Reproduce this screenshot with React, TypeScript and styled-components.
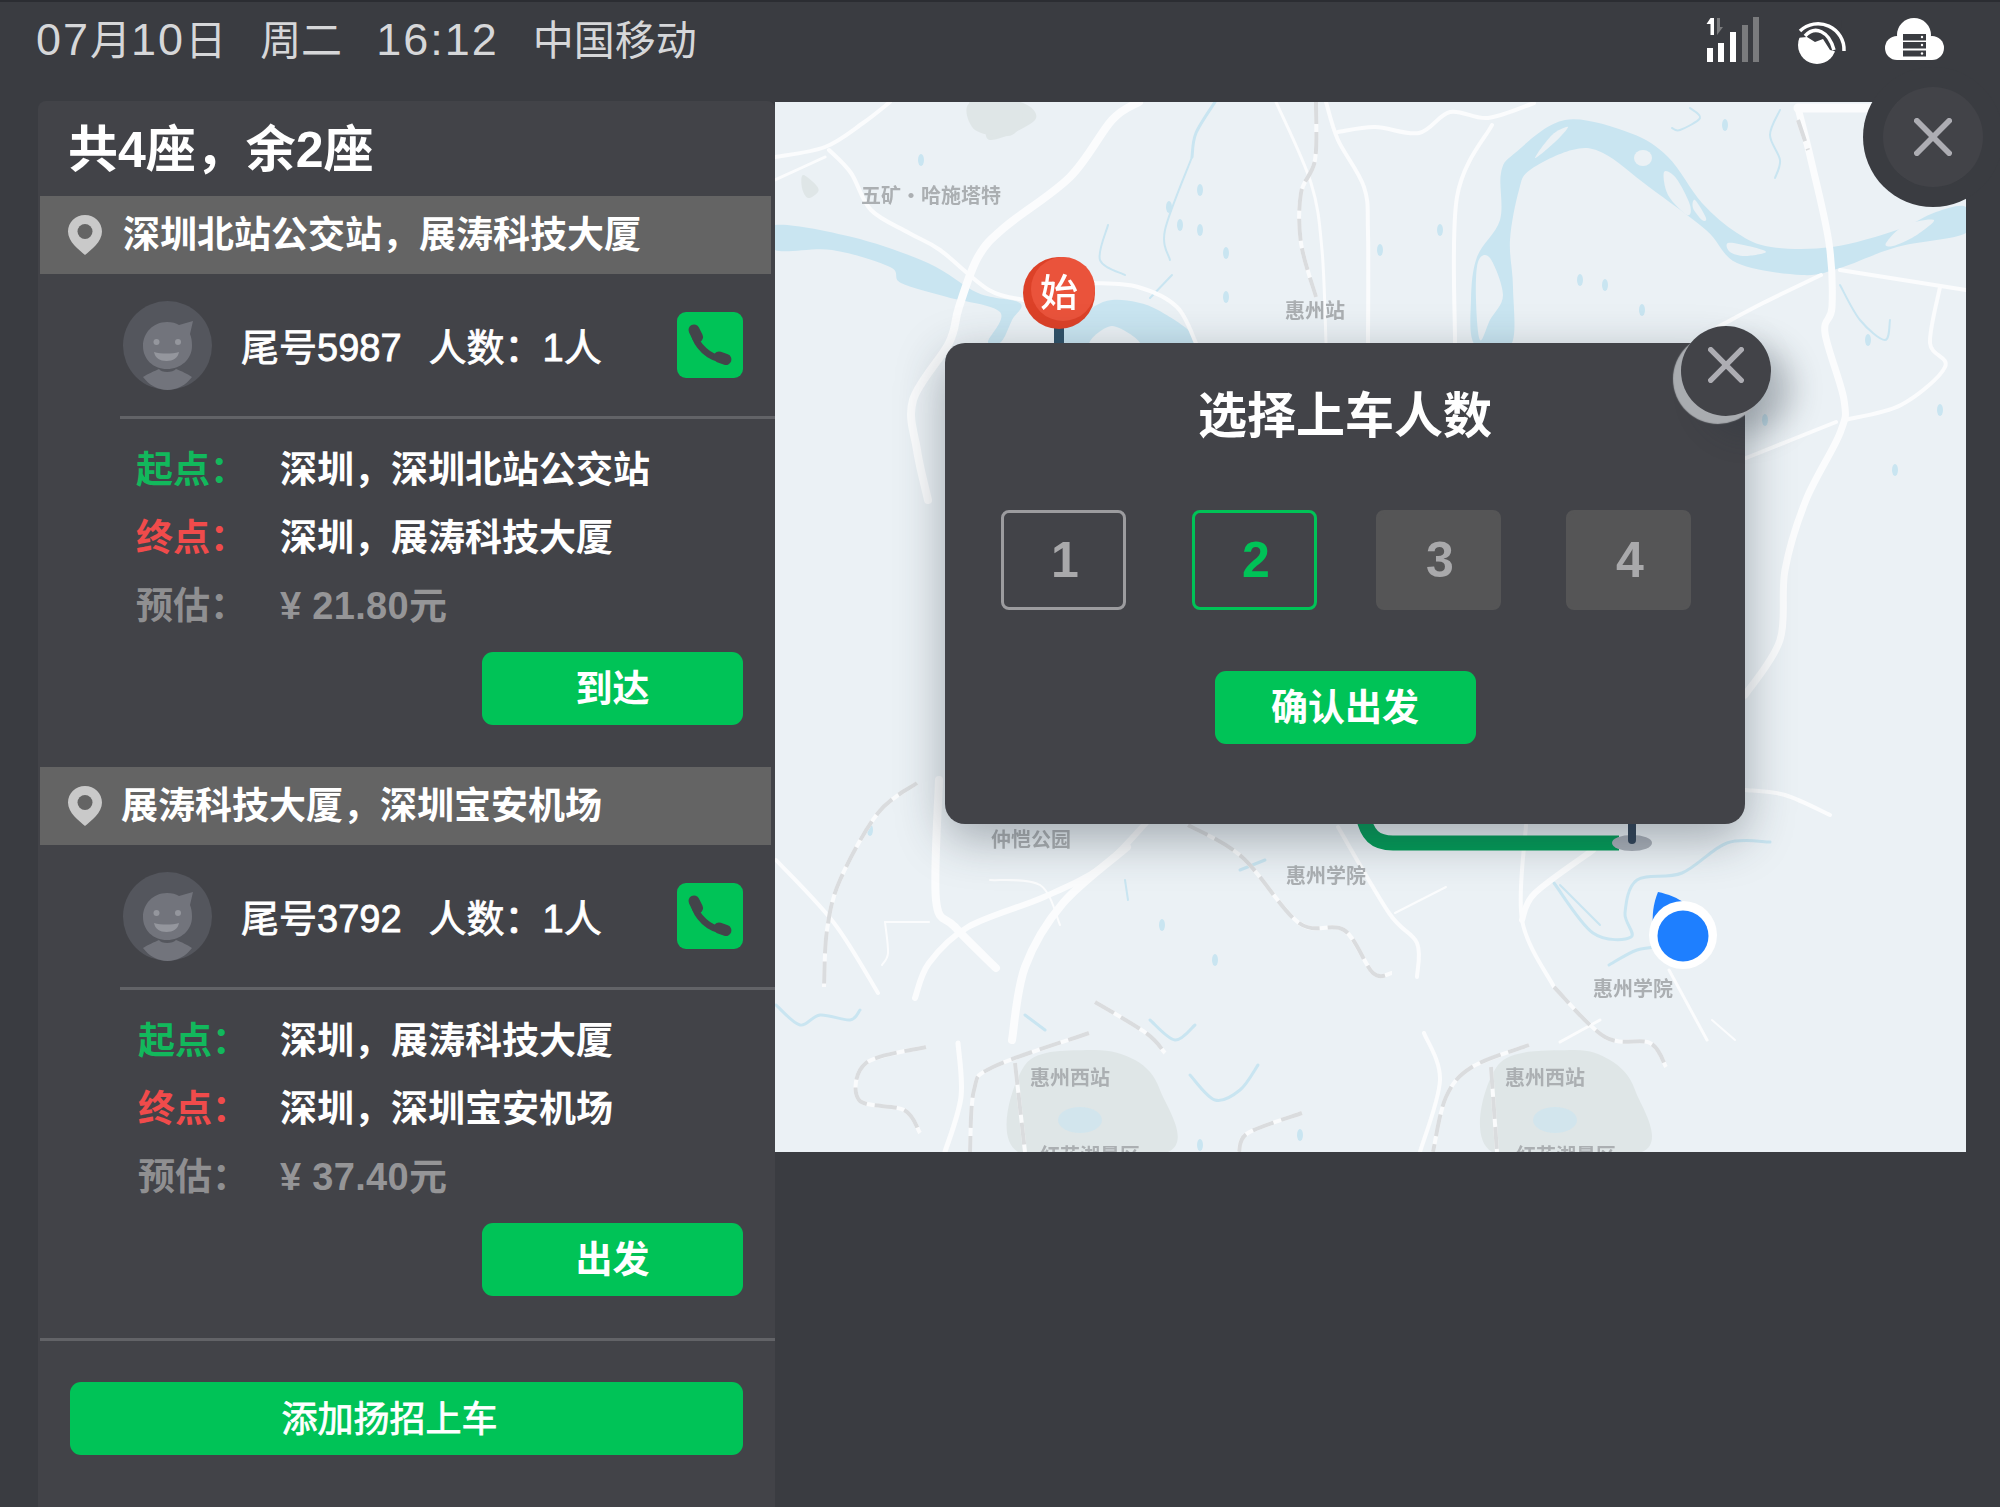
import React from 'react';
import styled, { createGlobalStyle } from 'styled-components';

const SANS = `"Liberation Sans", "Noto Sans CJK SC", sans-serif`;
const GREEN = '#00c357';

const Global = createGlobalStyle`
  html, body { margin: 0; padding: 0; background: #3a3c41; height: 1507px; overflow: hidden; }
  * { box-sizing: border-box; }
  body { font-family: ${SANS}; }
`;

const Page = styled.div`
  width: 2000px; height: 1507px; overflow: hidden; background: #3a3c41;
  border-top: 2px solid #2b2d32; color: #fff;
`;
const StatusBar = styled.header`
  height: 99px; display: flex; align-items: flex-start; justify-content: space-between;
  padding-left: 36px;
`;
const StatusGroup = styled.div`
  display: flex; align-items: baseline; gap: 34px; margin-top: 10px; font-size: 41px; line-height: 56px; color: #d6d7d9;
`;
const Num = styled.span` font-size: 45px; letter-spacing: 2px; `;
const StatusIcons = styled.div` width: 294px; height: 70px; `;
const Main = styled.main` display: flex; align-items: flex-start; padding-left: 38px; `;
const Panel = styled.aside`
  width: 737px; height: 1406px; background: #424348; border-radius: 8px 8px 0 0; flex: none;
`;
const Title = styled.h1`
  margin: 0; height: 95px; padding: 19px 0 0 30px; font-size: 50px; line-height: 60px; font-weight: 700;
`;
const Band = styled.div<{ $gap: number }>`
  height: 78px; margin: 0 4px 0 2px; background: #646464; display: flex; align-items: center;
  padding-left: 28px; gap: ${p => p.$gap}px; font-size: 37px; font-weight: 700; line-height: 50px;
`;
const BandText = styled.span` padding-top: 2px; `;
const Passenger = styled.div`
  height: 142px; display: flex; align-items: center; padding: 0 32px 0 85px;
`;
const PassengerText = styled.div`
  display: flex; gap: 27px; margin-left: 29px; flex: 1; font-size: 38px; line-height: 50px; padding-top: 6px;
  -webkit-text-stroke: .8px #fff;
`;
const PhoneButton = styled.button`
  width: 66px; height: 66px; border: 0; padding: 0; background: ${GREEN}; border-radius: 9px; display: block;
`;
const Divider = styled.div<{ $left: number }>`
  height: 3px; margin-left: ${p => p.$left}px; background: #626367;
`;
const Info = styled.div<{ $left: number }>`
  padding: 13px 31px 0 ${p => p.$left}px;
`;
const InfoRow = styled.div<{ $h: number }>`
  display: flex; height: ${p => p.$h}px; align-items: center; font-size: 37px; font-weight: 700;
`;
const InfoLabel = styled.span<{ $c: string; $w: number }>` width: ${p => p.$w}px; flex: none; color: ${p => p.$c}; `;
const InfoValue = styled.span` color: #fff; `;
const Price = styled.span` color: #959597; font-size: 38px; letter-spacing: .3px; `;
const ActionRow = styled.div`
  display: flex; justify-content: flex-end; margin: 16px 32px 42px 0;
`;
const GreenButton = styled.button<{ $w: number; $shift?: number; $light?: boolean }>`
  width: ${p => p.$w}px; height: 73px; background: ${GREEN}; border: 0; border-radius: 11px; color: #fff;
  font: ${p => (p.$light ? 400 : 700)} ${p => (p.$light ? 36 : 37)}px/50px ${SANS}; padding: 2px ${p => p.$shift || 0}px 0 0; display: block;
  ${p => (p.$light ? '-webkit-text-stroke: .8px #fff;' : '')}
`;
const WideWrap = styled.div` padding: 41px 32px 0 32px; `;
const MapPane = styled.section`
  position: relative; width: 1191px; height: 1050px; flex: none; margin-top: 1px; background: #ebf1f5;
`;
const MapSvg = styled.svg`
  display: block; width: 1191px; height: 1050px; filter: blur(0.6px);
`;
const MapClose = styled.button`
  position: absolute; left: 1108px; top: -15px; width: 100px; height: 100px; border-radius: 50%; border: 0; padding: 0;
  background: #424348; box-shadow: 0 0 0 20px #3a3c41; display: flex; align-items: center; justify-content: center;
`;
const Modal = styled.div`
  position: absolute; left: 170px; top: 241px; width: 800px; height: 481px; background: #424348; border-radius: 20px;
  box-shadow: 0 14px 48px rgba(40, 50, 60, .38);
`;
const ModalTitle = styled.h2`
  margin: 0; padding-top: 39px; height: 167px; text-align: center; font: 700 49px/68px ${SANS};
`;
const Seats = styled.div` display: flex; padding-left: 56px; `;
const Seat = styled.div<{ $kind: 'idle' | 'active' | 'off'; $ml: number }>`
  width: 125px; height: 100px; margin-left: ${p => p.$ml}px; border-radius: 8px; display: flex; align-items: center; justify-content: center;
  font-size: 50px; font-weight: 700; padding-left: 3px;
  border: 3px solid ${p => (p.$kind === 'active' ? GREEN : p.$kind === 'idle' ? '#9c9c9f' : '#555556')};
  background: ${p => (p.$kind === 'off' ? '#555556' : 'transparent')};
  color: ${p => (p.$kind === 'active' ? GREEN : '#a9a9ab')};
`;
const ModalAction = styled.div` display: flex; justify-content: center; margin-top: 61px; `;
const ModalClose = styled.button`
  position: absolute; left: 736px; top: -17px; width: 90px; height: 90px; border-radius: 50%; border: 0; padding: 0 0 13px;
  background: #424348; display: flex; align-items: center; justify-content: center;
  box-shadow: -8px 8px 1px #a9acb0, 22px 18px 30px rgba(40,50,60,.28);
`;

const Pin = () => (
  <svg width="34" height="40" viewBox="0 0 34 40">
    <path d="M17 0C7.6 0 0 7.4 0 16.6 0 27 11 35 17 40c6-5 17-13 17-23.4C34 7.4 26.4 0 17 0z" fill="#c9c9c9" />
    <circle cx="17" cy="16.5" r="7.5" fill="#646464" />
  </svg>
);
const Avatar = () => (
  <svg width="89" height="89" viewBox="0 0 89 89">
    <circle cx="44.5" cy="44.5" r="44.5" fill="#54565d" />
    <path d="M20 76c4-3 12-6 16-8 2 4 14 4 17 0 5 2 12 5 16 8-6 8-15 13-24.500 13S26 84 20 76z" fill="#72747c" />
    <path d="M44 21c5 0 9 1 12 3l14-4-3 13c1.500 3.500 2 7 2 12 0 13-11 23-25 23S20 58 20 45s10-24 24-24z" fill="#72747c" />
    <circle cx="33.500" cy="41" r="3" fill="#94969d" />
    <circle cx="55" cy="41" r="3" fill="#94969d" />
    <path d="M31 51c7 2 18 2 25 0-1 6-6 9-12.500 9S32 57 31 51z" fill="#94969d" />
  </svg>
);
const PhoneIcon = () => (
  <svg width="66" height="66" viewBox="0 0 66 66" fill="none" stroke="#43444a" strokeLinecap="round">
    <path d="M17 21C19 33 32 47 47 47" strokeWidth="6.500" />
    <path d="M17 18l3.500 7" strokeWidth="11" />
    <path d="M42 45l7 2.500" strokeWidth="11" />
  </svg>
);
const CloseX = ({ size, w }: { size: number; w: number }) => (
  <svg width={size} height={size} viewBox="0 0 40 40" stroke="#adadb3" strokeWidth={w} strokeLinecap="round">
    <path d="M3 3l34 34M37 3L3 37" />
  </svg>
);
const StatusGlyphs = () => (
  <svg width="294" height="70" viewBox="1706 2 294 70">
    <g fill="#fff">
      <rect x="1707" y="48" width="6" height="14" /><rect x="1718" y="43" width="6" height="19" /><rect x="1730" y="32" width="6" height="30" />
    </g>
    <g fill="#7a7b7d">
      <rect x="1742" y="25" width="6" height="37" /><rect x="1753" y="17" width="6" height="45" />
      <path d="M1717 18h3v9h3l-6 8z" />
    </g>
    <path d="M1710.500 18h3.500v17h-3.500v-11h-4z" fill="#fff" />
    <circle cx="1817" cy="45" r="19" fill="#fff" />
    <path d="M1796 38l11-1 8 5 8-3 7 11 8 2 4-32h-46z" fill="#3a3c41" />
    <path d="M1800 31A26 26 0 0 1 1844 51" stroke="#fff" strokeWidth="3.500" fill="none" />
    <path d="M1805 36C1815 25 1829 31 1834 50" stroke="#fff" strokeWidth="3.500" fill="none" />
    <g fill="#fff">
      <circle cx="1897" cy="48" r="12" /><circle cx="1914" cy="35" r="17" /><circle cx="1932" cy="48" r="12" /><rect x="1897" y="42" width="35" height="18" />
    </g>
    <g fill="#3a3c41">
      <rect x="1903" y="34" width="23" height="6.500" /><rect x="1903" y="42" width="23" height="6.500" /><rect x="1903" y="50.500" width="23" height="6" />
    </g>
    <g fill="#fff"><circle cx="1922" cy="37" r="1.200" /><circle cx="1922" cy="45" r="1.200" /><circle cx="1922" cy="53.500" r="1.200" /></g>
  </svg>
);

type P = [number, number];
const smooth = (pts: P[], closed = false): string => {
  const n = pts.length;
  const at = (i: number): P => (closed ? pts[(i + n) % n] : pts[Math.max(0, Math.min(n - 1, i))]);
  let d = `M${pts[0][0]} ${pts[0][1]}`;
  const end = closed ? n : n - 1;
  for (let i = 0; i < end; i++) {
    const [p0, p1, p2, p3] = [at(i - 1), at(i), at(i + 1), at(i + 2)];
    d += `C${p1[0] + (p2[0] - p0[0]) / 6} ${p1[1] + (p2[1] - p0[1]) / 6} ${p2[0] - (p3[0] - p1[0]) / 6} ${p2[1] - (p3[1] - p1[1]) / 6} ${p2[0]} ${p2[1]}`;
  }
  return closed ? d + 'Z' : d;
};

const WATER = '#c9e5f1';
const BG = '#ebf1f5';
const PARK = '#dfe6e7';

const waterShapes: P[][] = [
  [[775,225],[852,237],[928,263],[978,293],[1020,303],[1012,320],[1001,342],[988,342],[1000,312],[947,297],[901,283],[890,267],[832,250],[775,250]],
  [[1060,345],[1081,317],[1112,300],[1158,310],[1192,345]],
  [[1966,207],[1936,212],[1897,230],[1832,247],[1771,247],[1737,233],[1702,203],[1668,157],[1630,133],[1565,120],[1515,153],[1501,173],[1500,220],[1477,257],[1471,300],[1475,345],[1511,345],[1513,287],[1510,240],[1519,190],[1530,170],[1572,150],[1603,153],[1649,187],[1706,230],[1737,263],[1802,275],[1840,268],[1897,247],[1966,233]],
  [[1020,110],[970,103],[975,130],[1012,135]],
];
const islands: P[][] = [
  [[1478,262],[1490,258],[1503,295],[1490,320],[1480,340],[1476,300]],
  [[1535,158],[1552,135],[1568,127],[1555,142]],
  [[1664,172],[1676,178],[1690,205],[1687,215],[1668,195]],
  [[1695,200],[1706,218],[1702,220],[1693,208]],
  [[1728,243],[1748,246],[1766,252],[1745,256],[1730,252]],
  [[1886,243],[1905,225],[1934,220],[1915,236],[1893,246]],
  [[1090,345],[1112,326],[1140,345]],
];
const parks: P[][] = [
  [[1025,1065],[1090,1050],[1135,1060],[1160,1090],[1168,1152],[1018,1152]],
  [[1498,1065],[1570,1050],[1610,1060],[1635,1090],[1642,1152],[1492,1152]],
  [[970,102],[1020,102],[1035,120],[990,140],[985,115]],
  [[803,175],[816,185],[818,192],[808,198],[802,188]],
];
const roads: [number, P[]][] = [
  [4, [[775,157],[825,147],[863,123],[890,102]]],
  [3, [[775,180],[825,157]]],
  [4, [[829,150],[851,173],[871,210],[909,233],[940,250],[989,290],[1024,300]]],
  [8, [[1139,102],[1112,120],[1070,177],[1005,227],[978,257],[959,307],[949,343],[913,400],[917,450],[928,500]]],
  [4, [[1093,283],[1138,287],[1177,307],[1196,343]]],
  [3, [[1276,102],[1311,183],[1322,250],[1326,343]]],
  [4, [[1326,102],[1338,140],[1364,187],[1368,233],[1368,343]]],
  [4, [[1338,132],[1375,127],[1419,133],[1450,112],[1488,118],[1534,103]]],
  [4, [[1492,125],[1457,197],[1455,343]]],
  [7, [[1798,108],[1811,160],[1829,243],[1832,307],[1825,333],[1844,400],[1840,433],[1806,500],[1785,570],[1780,640],[1745,695]]],
  [9, [[1798,108],[1871,108]]],
  [4, [[1821,275],[1763,303],[1718,327]]],
  [4, [[1840,270],[1966,290]]],
  [4, [[1940,287],[1930,343],[1945,367],[1901,405],[1844,420]]],
  [4, [[1836,422],[1746,458]]],
  [4, [[1745,790],[1785,795],[1830,815]]],
  [8, [[939,780],[936,900],[955,927],[996,968]]],
  [6, [[1146,823],[1102,867],[1044,897],[968,927],[929,963],[915,998]]],
  [8, [[1127,847],[1063,903],[1025,967],[1012,1040]]],
  [4, [[776,860],[834,923],[878,993]]],
  [2, [[885,922],[929,922]]],
  [2, [[885,922],[888,953],[882,965]]],
  [4, [[1338,827],[1389,913],[1417,943],[1417,977]]],
  [2, [[1446,887],[1395,913]]],
  [4, [[1526,825],[1522,920],[1554,987]]],
  [6, [[1593,850],[1535,893],[1522,920]]],
  [3, [[1669,970],[1707,1040]]],
  [4, [[1424,1033],[1440,1080],[1420,1152]]],
  [5, [[958,1043],[961,1097],[945,1152]]],
  [2, [[990,880],[1040,885],[1060,925]]],
  [2, [[1735,1040],[1712,1020]]],
  [3, [[1560,1042],[1600,1020]]],
];
const rails: P[][] = [
  [[1316,102],[1315,160],[1301,193],[1301,243],[1316,297]],
  [[917,783],[878,813],[840,880],[827,930],[824,987]],
  [[1188,825],[1242,857],[1299,923],[1344,930],[1373,973],[1392,973]],
  [[1095,1002],[1146,1033],[1165,1053]],
  [[926,1047],[866,1063],[859,1100],[904,1110],[920,1133]],
  [[1089,1033],[993,1067],[974,1090],[970,1152]],
  [[1015,1063],[1025,1152]],
  [[1302,1113],[1248,1133],[1239,1152]],
  [[1529,1045],[1472,1067],[1446,1097],[1433,1152]],
  [[1491,1067],[1497,1152]],
  [[1554,987],[1605,1037],[1650,1043],[1666,1067]],
  [[1798,120],[1808,150]],
];
const streams: [number, P[]][] = [
  [3, [[1770,842],[1727,843],[1682,873],[1637,880],[1625,913],[1631,937],[1593,933],[1554,883]]],
  [3, [[1609,965],[1637,950],[1663,947]]],
  [2, [[1780,110],[1770,135],[1780,160],[1775,178]]],
  [2, [[1690,108],[1700,118],[1680,130],[1672,128]]],
  [2, [[1840,285],[1860,320],[1885,340],[1890,320]]],
  [3, [[1215,102],[1196,133],[1192,157]]],
  [2, [[1192,157],[1165,230],[1170,260]]],
  [2, [[1108,225],[1100,260],[1125,275]]],
  [2, [[1172,275],[1150,298]]],
  [3, [[776,1005],[800,1025],[820,1015],[850,1020],[860,1010]]],
  [3, [[1025,1015],[1045,1030]]],
  [3, [[1150,1020],[1175,1040],[1195,1025]]],
  [3, [[1190,1075],[1215,1100],[1240,1090],[1258,1065]]],
  [3, [[1240,870],[1265,860]]],
  [2, [[1125,880],[1128,900]]],
  [2, [[1560,885],[1600,925]]],
];
const specks: P[] = [
  [921,160],[1200,190],[1169,207],[1200,230],[1226,253],[1226,297],[1180,225],[1605,285],[1580,280],[1642,310],[1868,340],[1725,125],[1765,420],
  [870,830],[1200,1145],[1300,1135],[1162,925],[1215,960],[1895,470],[1940,410],[1440,230],[1380,250],
];
const labels: [string, number, number][] = [
  ['五矿·哈施塔特', 931, 196], ['惠州站', 1315, 311], ['仲恺公园', 1031, 840], ['惠州学院', 1326, 876],
  ['惠州学院', 1633, 989], ['惠州西站', 1070, 1078], ['惠州西站', 1545, 1078], ['红花湖景区', 1090, 1156], ['红花湖景区', 1566, 1156],
];

const MapArt = () => (
  <MapSvg viewBox="775 102 1191 1050">
    <rect x="775" y="102" width="1191" height="1050" fill={BG} />
    {parks.map((p, i) => <path key={i} d={smooth(p, true)} fill={PARK} />)}
    {waterShapes.map((p, i) => <path key={i} d={smooth(p, true)} fill={i === 3 ? PARK : WATER} />)}
    {islands.map((p, i) => <path key={i} d={smooth(p, true)} fill={BG} />)}
    <ellipse cx="1643" cy="158" rx="9" ry="8" fill={BG} />
    <ellipse cx="1080" cy="1120" rx="22" ry="13" fill={WATER} opacity=".6" />
    <ellipse cx="1555" cy="1120" rx="22" ry="13" fill={WATER} opacity=".6" />
    {streams.map(([w, p], i) => <path key={i} d={smooth(p)} stroke={WATER} strokeWidth={w} fill="none" strokeLinecap="round" />)}
    {specks.map(([x, y], i) => <ellipse key={i} cx={x} cy={y} rx="3" ry="6" fill={WATER} />)}
    {roads.map(([w, p], i) => <path key={i} d={smooth(p)} stroke="#fbfcfd" strokeWidth={w} fill="none" strokeLinecap="round" />)}
    {rails.map((p, i) => (
      <g key={i} fill="none">
        <path d={smooth(p)} stroke="#fafbfc" strokeWidth="4" />
        <path d={smooth(p)} stroke="#dadcde" strokeWidth="4" strokeDasharray="22 8" />
      </g>
    ))}
    {labels.map(([t, x, y], i) => (
      <text key={i} x={x} y={y + 7} textAnchor="middle" fontSize="20" fontWeight="700" fill="#abafb2" fontFamily='"Noto Sans CJK SC", sans-serif'>{t}</text>
    ))}
    <path d="M1363 815c4 20 12 28 30 28h226" stroke="#009b56" strokeWidth="15" fill="none" />
    <ellipse cx="1632" cy="843" rx="20" ry="8" fill="#a9afb8" />
    <rect x="1628" y="815" width="8" height="29" rx="4" fill="#2f4257" />
    <rect x="1054" y="320" width="10" height="30" fill="#2f5168" />
    <circle cx="1059" cy="293" r="36" fill="#dc4128" />
    <circle cx="1063" cy="289" r="32" fill="#ea533b" />
    <text x="1059" y="306" textAnchor="middle" fontSize="38" fontWeight="500" fill="#fff" fontFamily='"Noto Sans CJK SC", sans-serif'>始</text>
    <path d="M1658 892c10 2 20 6 28 12l-33 24c-1-12 0-24 5-36z" fill="#1e7fff" />
    <circle cx="1683" cy="935" r="34" fill="#fff" />
    <circle cx="1683" cy="936" r="25.500" fill="#1e7fff" />
  </MapSvg>
);

const trips = [
  { band: '深圳北站公交站，展涛科技大厦', gap: 21, tail: '5987', from: '深圳，深圳北站公交站', to: '深圳，展涛科技大厦', price: '¥ 21.80元', action: '到达', left: 98, lw: 144 },
  { band: '展涛科技大厦，深圳宝安机场', gap: 19, tail: '3792', from: '深圳，展涛科技大厦', to: '深圳，深圳宝安机场', price: '¥ 37.40元', action: '出发', left: 100, lw: 142 },
];

export default function App() {
  return (
    <Page lang="zh-CN">
      <Global />
      <StatusBar>
        <StatusGroup>
          <span><Num>07</Num>月<Num>10</Num>日</span>
          <span>周二</span>
          <Num>16:12</Num>
          <span>中国移动</span>
        </StatusGroup>
        <StatusIcons><StatusGlyphs /></StatusIcons>
      </StatusBar>
      <Main>
        <Panel>
          <Title>共4座，余2座</Title>
          {trips.map(t => (
            <section key={t.tail}>
              <Band $gap={t.gap}><Pin /><BandText>{t.band}</BandText></Band>
              <Passenger>
                <Avatar />
                <PassengerText><span>尾号{t.tail}</span><span>人数：1人</span></PassengerText>
                <PhoneButton aria-label="电话"><PhoneIcon /></PhoneButton>
              </Passenger>
              <Divider $left={82} />
              <Info $left={t.left}>
                <InfoRow $h={69}><InfoLabel $c="#12b85c" $w={t.lw}>起点：</InfoLabel><InfoValue>{t.from}</InfoValue></InfoRow>
                <InfoRow $h={68}><InfoLabel $c="#f04b4b" $w={t.lw}>终点：</InfoLabel><InfoValue>{t.to}</InfoValue></InfoRow>
                <InfoRow $h={67}><InfoLabel $c="#8f8f91" $w={t.lw}>预估：</InfoLabel><Price>{t.price}</Price></InfoRow>
              </Info>
              <ActionRow><GreenButton $w={261}>{t.action}</GreenButton></ActionRow>
            </section>
          ))}
          <Divider $left={2} />
          <WideWrap><GreenButton $w={673} $shift={34} $light>添加扬招上车</GreenButton></WideWrap>
        </Panel>
        <MapPane>
          <MapArt />
          <MapClose aria-label="关闭"><CloseX size={38} w={6} /></MapClose>
          <Modal>
            <ModalTitle>选择上车人数</ModalTitle>
            <Seats>
              <Seat $kind="idle" $ml={0}>1</Seat>
              <Seat $kind="active" $ml={66}>2</Seat>
              <Seat $kind="off" $ml={59}>3</Seat>
              <Seat $kind="off" $ml={65}>4</Seat>
            </Seats>
            <ModalAction><GreenButton $w={261}>确认出发</GreenButton></ModalAction>
            <ModalClose aria-label="关闭"><CloseX size={36} w={6} /></ModalClose>
          </Modal>
        </MapPane>
      </Main>
    </Page>
  );
}
